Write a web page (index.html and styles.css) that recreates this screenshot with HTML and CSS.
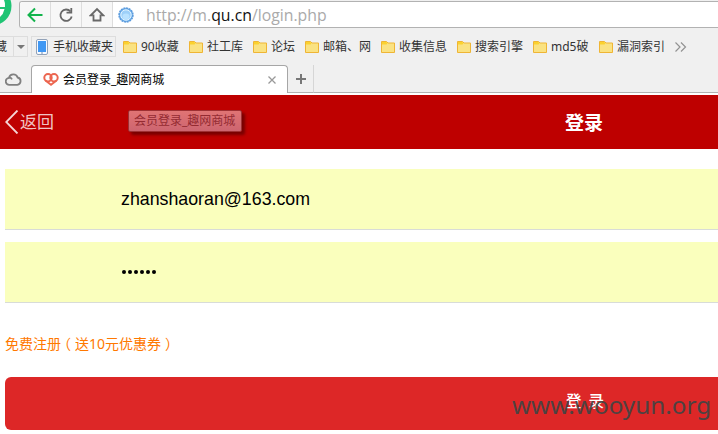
FILE: index.html
```html
<!DOCTYPE html>
<html lang="zh-CN">
<head>
<meta charset="utf-8">
<title>会员登录_趣网商城</title>
<link rel="stylesheet" href="styles.css">
</head>
<body>
<svg class="defs" width="0" height="0">
  <symbol id="folder" viewBox="0 0 14 12">
    <path d="M.5 .5H5.500L7 2H13.500V11.500H.5Z" fill="#fae282" stroke="#efb535"/>
    <path d="M1 1H5.300L6.500 2.500 5.500 3.500H1Z" fill="#fbd22e"/>
  </symbol>
</svg>
<div class="toolbar">
  <svg class="badge" width="12" height="27" viewBox="0 0 12 27"><circle cx="-8" cy="6" r="19.500" fill="#20c474"/><path d="M0 0H4Q5.500 3 5 7H0ZM0 9H4.500Q3.500 14 0 17Z" fill="#fff"/></svg>
  <div class="address">
    <span class="nav"><svg width="16" height="16" viewBox="0 0 16 16" fill="none" stroke="#12b34b" stroke-width="2"><path d="M15.500 8H2M8 1.500L1.500 8L8 14.500"/></svg></span>
    <span class="nav"><svg width="16" height="16" viewBox="0 0 16 16" fill="none" stroke="#686868" stroke-width="1.800"><path d="M12.500 4.500A5.700 5.700 0 1 0 13.700 9.500"/><path d="M8.500 5.700H13.300V1"/></svg></span>
    <span class="nav"><svg width="16" height="16" viewBox="0 0 16 16" fill="none" stroke="#686868" stroke-width="1.800"><path d="M3.500 8.300H1.800L8 2L14.200 8.300H12.500M4.500 7.500V13.500H11.500V7.500"/></svg></span>
    <svg class="globe" width="16" height="16" viewBox="0 0 16 16"><circle cx="8" cy="8" r="6.900" fill="#74b5ed" stroke="#5c9bdd" stroke-width="1.600" stroke-dasharray="2 .7"/><circle cx="8" cy="8" r="5.200" fill="#9dd0f9" stroke="#e4f4ff"/><ellipse cx="8" cy="9.500" rx="3.500" ry="3" fill="#b9e2ff"/></svg>
    <span class="url">http://m.<b>qu.cn</b>/login.php</span>
  </div>
</div>
<div class="bookmarks">
  <span class="fav">藏</span><span class="drop"><i></i></span>
  <span class="mobile"><svg width="12" height="16" viewBox="0 0 12 16"><rect x=".5" y=".5" width="11" height="15" rx="1.500" fill="#f7faff" stroke="#92a2b8"/><rect x="2" y="2" width="8" height="11" fill="#3f97f3"/><path d="M5 14H7" stroke="#7590b5"/></svg>手机收藏夹</span>
  <span class="mark w66"><svg><use href="#folder"/></svg>90收藏</span>
  <span class="mark w64"><svg><use href="#folder"/></svg>社工库</span>
  <span class="mark w52"><svg><use href="#folder"/></svg>论坛</span>
  <span class="mark w76"><svg><use href="#folder"/></svg>邮箱、网</span>
  <span class="mark w76"><svg><use href="#folder"/></svg>收集信息</span>
  <span class="mark w76"><svg><use href="#folder"/></svg>搜索引擎</span>
  <span class="mark w66"><svg><use href="#folder"/></svg>md5破</span>
  <span class="mark w76"><svg><use href="#folder"/></svg>漏洞索引</span>
  <svg class="more" width="12" height="10" viewBox="0 0 12 10" fill="none" stroke="#929292" stroke-width="1.200"><path d="M.5 .5L5 5L.5 9.500M6 .5L10.500 5L6 9.500"/></svg>
</div>
<div class="tabs">
  <span class="cloud"><svg width="17" height="14" viewBox="0 0 17 14" fill="none" stroke="#808080" stroke-width="1.800"><path d="M4.500 12.800A3.500 3.500 0 0 1 4 5.800A4.500 4.500 0 0 1 12.600 5.500A3.700 3.700 0 0 1 12.300 12.800ZM3.800 5.800Q6 5.300 7 7.300"/></svg></span>
  <div class="tab">
    <svg width="16" height="13" viewBox="0 0 16 13" fill="none" stroke="#ec6650" stroke-width="2"><circle cx="5" cy="4.700" r="3.700"/><circle cx="11" cy="4.700" r="3.700"/><path d="M2.500 7.500L8 11.700L13.500 7.500"/></svg>
    <span class="tab-title">会员登录_趣网商城</span>
    <svg class="close" width="8" height="8" viewBox="0 0 8 8" stroke="#999" stroke-width="1.300"><path d="M.5 .5L7.500 7.500M7.500 .5L.5 7.500"/></svg>
  </div>
  <span class="add"><svg width="10" height="10" viewBox="0 0 10 10" stroke="#777" stroke-width="2"><path d="M5 0V10M0 5H10"/></svg></span>
  <span class="rest"></span>
</div>
<header class="header">
  <a class="back"><svg width="14" height="24" viewBox="0 0 14 24" fill="none" stroke="#f6d5d5" stroke-width="1.800"><path d="M12.500 .5L1.200 12L12.500 23.500"/></svg><span>返回</span></a>
  <h1>登录</h1>
  <div class="tooltip">会员登录_趣网商城</div>
</header>
<main class="form">
  <div class="field">zhanshaoran@163.com</div>
  <div class="field password"><i></i><i></i><i></i><i></i><i></i><i></i></div>
  <a class="register">免费注册<span class="open">（</span>送10元优惠券<span class="shut">）</span></a>
  <div class="submit">登 录</div>
</main>
<div class="watermark">www.wooyun.org</div>
</body>
</html>
```
FILE: styles.css
```css
* { box-sizing: border-box; }
body {
  margin: 0;
  width: 718px;
  height: 434px;
  overflow: hidden;
  position: relative;
  background: #fff;
  font: 12px/16px "Noto Sans", "Noto Sans CJK SC", sans-serif;
}
svg { display: block; flex: none; }
.defs { position: absolute; }
.toolbar {
  height: 36px;
  padding-top: 1px;
  background: #f0f0f0;
  display: flex;
  align-items: flex-start;
}
.badge { width: 12px; margin: -1px 7px 0 0; }
.address {
  flex: 1;
  height: 27px;
  display: flex;
  align-items: center;
  background: #fff;
  border: 1px solid #b2b2b2;
  border-right: 0;
  border-radius: 3px 0 0 3px;
  overflow: hidden;
}
.nav {
  width: 31px;
  height: 25px;
  display: flex;
  align-items: center;
  justify-content: center;
  background: #f7f7f7;
  border-right: 1px solid #ddd;
}
.globe { margin: 0 12px 0 5px; }
.url { font: 15.8px/24px "Open Sans", sans-serif; color: #aaa; white-space: nowrap; }
.url b { font-weight: 400; color: #111; }
.bookmarks {
  height: 29px;
  padding-bottom: 8px;
  display: flex;
  align-items: center;
  background: #f0f0f0;
  color: #333;
  white-space: nowrap;
}
.fav {
  width: 13px;
  height: 21px;
  display: flex;
  align-items: center;
  justify-content: flex-end;
  padding-right: 6px;
  border: solid #ddd;
  border-width: 1px 0;
  overflow: hidden;
}
.drop {
  width: 15px;
  height: 21px;
  display: flex;
  align-items: center;
  justify-content: center;
  border: 1px solid #ddd;
}
.drop i { border: 4px solid transparent; border-top-color: #777; border-bottom: 0; }
.mobile {
  width: 85px;
  height: 21px;
  margin: 0 7px 0 3px;
  padding-left: 4px;
  display: flex;
  align-items: center;
  gap: 5px;
  border: 1px solid #ddd;
}
.mark { display: flex; align-items: center; gap: 4px; flex: none; }
.mark svg { width: 14px; height: 12px; }
.w52 { width: 52px; }
.w64 { width: 64px; }
.w66 { width: 66px; }
.w76 { width: 76px; }
.tabs { height: 30px; display: flex; background: #f0f0f0; border-bottom: 2px solid #fff; }
.cloud {
  width: 31px;
  height: 28px;
  padding: 7px 0 0 5px;
  border-bottom: 1px solid #b2b2b2;
}
.tab {
  width: 257px;
  height: 28px;
  padding: 0 11px 0 11px;
  display: flex;
  align-items: center;
  background: #fff;
  border: 1px solid #a6a6a6;
  border-bottom: 0;
  border-radius: 4px 4px 0 0;
  color: #000;
}
.tab-title { margin-left: 4px; flex: 1; }
.add {
  width: 26px;
  padding: 9px 0 0 8px;
  border-right: 1px solid #d6d6d6;
  border-bottom: 1px solid #b2b2b2;
}
.rest { flex: 1; border-bottom: 1px solid #b2b2b2; }
.header {
  position: relative;
  height: 54px;
  padding-left: 5px;
  display: flex;
  align-items: center;
  background: #be0000;
  color: #fff;
}
.back { width: 560px; display: flex; align-items: center; gap: 1px; font-size: 17px; color: #f0c4c4; }
.header h1 { margin: 0; font-size: 19px; line-height: 26px; padding-top: 1px; }
.tooltip {
  position: absolute;
  left: 128px;
  top: 15px;
  width: 114px;
  height: 22px;
  padding-left: 5px;
  line-height: 20px;
  white-space: nowrap;
  color: #942b32;
  background: linear-gradient(#e07474, #cd6570);
  border: 1px solid #9e3033;
  border-radius: 2px;
  box-shadow: 3px 3px 3px #780000;
}
.form { padding: 20px 0 0 5px; display: flex; flex-direction: column; }
.field {
  height: 61px;
  margin-bottom: 12px;
  padding-left: 116px;
  display: flex;
  align-items: center;
  background: #faffbd;
  border-bottom: 1px solid #d8dcd8;
  font: 17.8px "Liberation Sans", sans-serif;
  color: #000;
}
.password { gap: 2px; padding-left: 117px; }
.password i { width: 4px; height: 4px; border-radius: 50%; background: #000; }
.register { margin-top: 19px; height: 43px; line-height: 20px; font-size: 14px; color: #ff7800; }
.open { margin: 0 4px 0 -4px; }
.shut { margin-left: 4px; }
.submit {
  height: 53px;
  padding-left: 561px;
  line-height: 49px;
  font-size: 15.5px;
  font-weight: 500;
  white-space: pre;
  word-spacing: 3px;
  color: #fff;
  background: #dd2727;
  border-radius: 6px 0 0 6px;
}
.watermark {
  position: absolute;
  left: 512px;
  top: 388px;
  font: 24.3px/34px "Noto Sans", sans-serif;
  color: #444;
  opacity: .93;
}
```
